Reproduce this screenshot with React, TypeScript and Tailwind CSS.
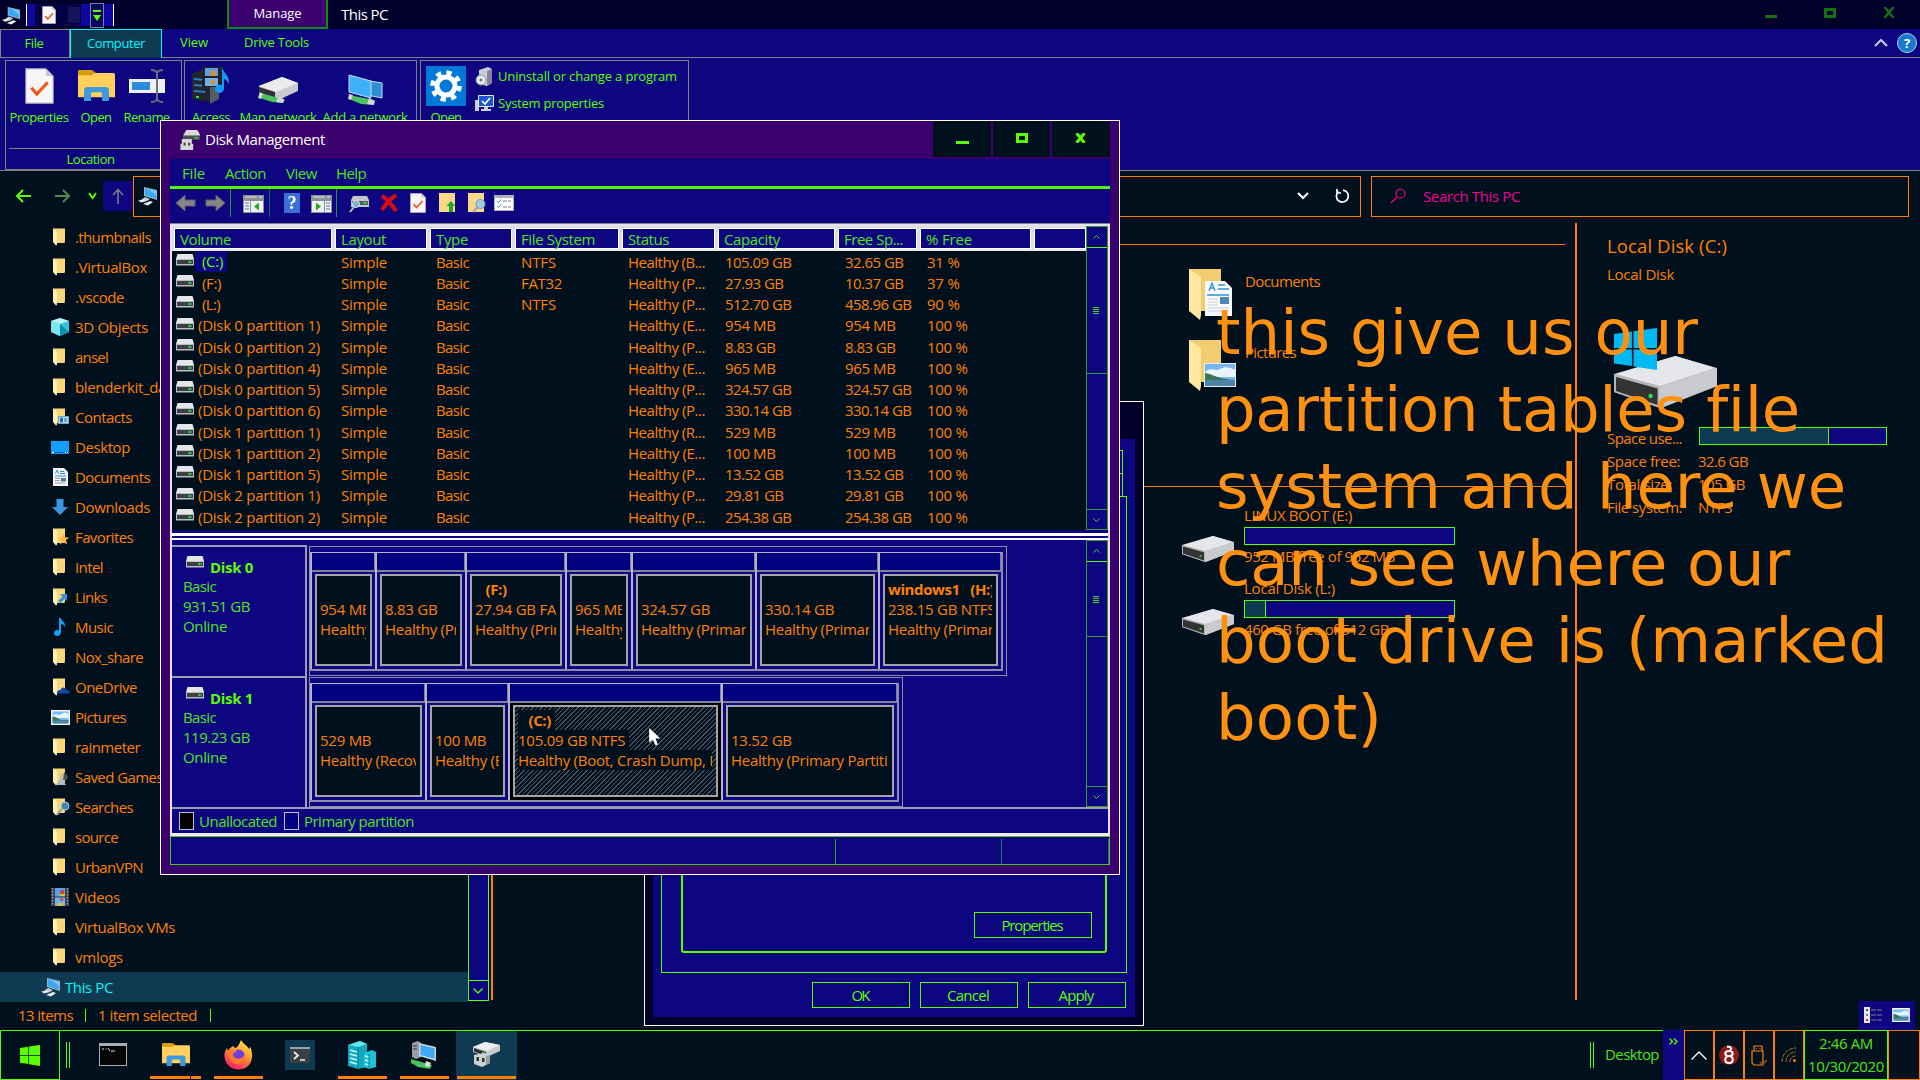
import React, { useLayoutEffect, useRef, useState } from "react";

/* Text whose tracking is adjusted so the run is exactly `w` pixels wide. */
function Fit({ w, children, className = "" }: { w: number; children: string; className?: string }) {
  const ref = useRef<HTMLSpanElement>(null);
  const [ls, setLs] = useState(0);
  useLayoutEffect(() => {
    if (ref.current) {
      const natural = ref.current.getBoundingClientRect().width;
      setLs((w - natural) / children.length);
    }
  }, [w, children]);
  return (
    <span ref={ref} className={`inline-block whitespace-pre shrink-0 ${className}`} style={{ letterSpacing: `${ls}px` }}>
      {children}
    </span>
  );
}

/* ---------- icons ---------- */

function Folder({ extra }: { extra?: string }) {
  return (
    <svg viewBox="0 0 18 18" className="h-[18px] w-[18px] shrink-0 overflow-visible">
      <path d="M2 .5h12v12.5l-.5 2H6z" fill="#f7d77a" />
      <path d="M2 .5l4 3.2v13l-1 .8-3-3.5z" fill="#fff0b8" />
      {extra === "card" && (
        <g>
          <rect x="7.500" y="8.500" width="10" height="7" fill="#b8def2" stroke="#6fa6c6" />
          <path d="M9.500 10h2v4h-2zM13 11h3M13 13h3" fill="#2a6a94" stroke="#2a6a94" />
        </g>
      )}
      {extra === "star" && <path d="M12.500 5.500l1.600 3.800 4 .2-3.100 2.500 1.200 4.500-3.700-2.400-3.600 2.400 1.200-4.500-3-2.500 3.800-.2z" fill="#ffb53a" />}
      {extra === "link" && <path d="M9 6h7v7l-2.200-2.200L9.500 15.500 7 13l4.500-4.500z" fill="#3b93dd" />}
      {extra === "cloud" && <path d="M6 15.500c-.5-3 2-4 3.500-3.500 1-3.500 5-3.500 6 0 2.500 0 3.500 1.500 3 3.500z" fill="#1048a8" />}
      {extra === "chess" && (
        <g>
          <path d="M13 4l4 4-1 4h-4z" fill="#4b4f55" />
          <path d="M10 5l2 1-1 4 4 7H5l4-6z" fill="#aebbc4" />
        </g>
      )}
      {extra === "search" && (
        <g>
          <path d="M11 11l-5 5.500" stroke="#9ba5ac" strokeWidth="2" />
          <circle cx="14" cy="8" r="4" fill="#3f86b5" stroke="#a9c6d8" />
        </g>
      )}
    </svg>
  );
}

function Picture({ className = "h-[15px] w-[19px]" }: { className?: string }) {
  return (
    <svg viewBox="0 0 19 15" className={`${className} shrink-0`}>
      <rect width="19" height="15" fill="#f2f4f6" />
      <rect x="1.500" y="1.500" width="16" height="12" fill="#78bdf0" />
      <path d="M1.500 5c4-2 6 1 9-1s5-1 7 0v4h-16z" fill="#e8f5fc" />
      <path d="M1.500 6.500c4 0 6 3 9 3.500h7v1h-16z" fill="#3f7460" />
      <rect x="1.500" y="10.500" width="16" height="3" fill="#4f86a6" />
    </svg>
  );
}

function ThisPc({ className = "h-5 w-5" }: { className?: string }) {
  return (
    <svg viewBox="0 0 20 20" className={`${className} shrink-0`}>
      <path d="M6 1l13 3v10L6 10z" fill="#9fb4c4" />
      <path d="M7 2.200l11 2.600v7.800L7 9.300z" fill="#39a8f5" />
      <path d="M10 3l8 1.900v4z" fill="#76c8fb" />
      <path d="M7 11l5 2-3 2-6-1z" fill="#c6ced6" />
      <path d="M0 14.500l6-1 3 1.500-6 1.500zM5 18l7-3 3 1-5 3.500z" fill="#e9edf1" />
    </svg>
  );
}

function MiniDrive() {
  return (
    <svg viewBox="0 0 18 12" className="h-3 w-[18px] shrink-0">
      <path d="M1.500 0h15L18 5H0z" fill="#e4e6ea" />
      <path d="M0 5h18v6.500H0z" fill="#b9bcc3" />
      <path d="M1 6h16v4H1z" fill="#3d3f42" />
      <path d="M12 8h4M13.500 6.800v2.500" stroke="#2ee048" />
    </svg>
  );
}

function BigDrive({ className }: { className: string }) {
  return (
    <svg viewBox="0 0 52 26" className={`${className} shrink-0`} preserveAspectRatio="none">
      <path d="M0 9L31 0l21 6v9L24 26 0 18z" fill="#c2c3c7" />
      <path d="M1 9L31 0l20 6-28 9z" fill="#e6e7ea" />
      <path d="M0 9l23 6v11L0 18z" fill="#b4b5b8" />
      <path d="M1 10.500l21 5.800v8.200L1 17.500z" fill="#333" />
      <path d="M23 15.500L52 6v9L23 26z" fill="#c9cace" />
      <circle cx="18.500" cy="20" r="1.100" fill="#26e04a" />
    </svg>
  );
}

function SheetCheck({ className = "h-5 w-4" }: { className?: string }) {
  return (
    <svg viewBox="0 0 16 20" className={`${className} shrink-0`} preserveAspectRatio="none">
      <path d="M.5.5h11l4 4v15H.5z" fill="#f6f6f8" stroke="#bfc0c6" strokeWidth=".6" />
      <path d="M11.500.5v4h4z" fill="#c8c9d0" />
      <path d="M3.500 11l3 3.500L12.500 8" fill="none" stroke="#f0591c" strokeWidth="1.700" />
    </svg>
  );
}

function ExplorerIcon({ className = "h-[31px] w-[37px]" }: { className?: string }) {
  return (
    <svg viewBox="0 0 37 42" className={`${className} shrink-0`} preserveAspectRatio="none">
      <path d="M0 1.500Q0 0 1.500 0H14l4 4v6H0z" fill="#d99c0c" />
      <path d="M0 7h14l3-3h18q2 0 2 2v31H0z" fill="#ffd15c" />
      <path d="M6 42V27q0-4 4-4h17q4 0 4 4v15h-7V32q0-2-2-2h-7q-2 0-2 2v10z" fill="#3d9ade" />
    </svg>
  );
}

function UsbDrive({ className }: { className: string }) {
  return (
    <svg viewBox="0 0 22 22" className={`${className} shrink-0`}>
      <path d="M4 5l3-5h12l3 5v6H4z" fill="#d8dadd" />
      <path d="M4 6h18v5H4z" fill="#4c4e52" />
      <path d="M16 8.500h4" stroke="#2de04a" strokeWidth="1.500" />
      <path d="M2 10h11v5h1.500v7H.500v-7H2z" fill="#d5d6d8" />
      <path d="M4 14h2v3H4zM9 14h2v3H9z" fill="#333" />
    </svg>
  );
}

function UsbDriveLarge() {
  return (
    <svg viewBox="0 0 27 25" className="h-[25px] w-[27px] shrink-0">
      <path d="M0 5L12 0l15 3v6L14 15 0 10z" fill="#c9cacd" />
      <path d="M0 5L12 0l15 3-13 6z" fill="#ededef" />
      <path d="M1 6l12 4v4L1 9.500z" fill="#2c2e31" />
      <path d="M9 11h3" stroke="#2de04a" strokeWidth="1.500" />
      <path d="M1 13l10-2 6 2v8l-8 4-8-3z" fill="#d0d1d4" />
      <path d="M3.500 15h2.500v4H3.500zM9 16h2.500v4H9z" fill="#333" />
      <path d="M17 13v8l-4 2v-9z" fill="#9b9da2" />
    </svg>
  );
}

function sideIcon(kind: string) {
  switch (kind) {
    case "cube":
      return (
        <svg viewBox="0 0 18 18" className="h-[18px] w-[18px]">
          <path d="M9 0l9 3v11l-9 4-9-4V3z" fill="#35c5dc" />
          <path d="M0 3l9 3v12l-9-4z" fill="#7ce6ef" />
          <path d="M9 0l9 3-9 3-9-3z" fill="#b7f4f5" />
          <path d="M9 6l9 8-9 4z" fill="#0b91a8" />
        </svg>
      );
    case "desktop":
      return (
        <svg viewBox="0 0 18 13" className="h-[13px] w-[18px]">
          <rect width="18" height="13" fill="#149dfb" />
          <path d="M0 11.500h18" stroke="#0a5fae" />
          <path d="M1 11.500h2M14 11.500h1M16 11.500h1" stroke="#fff" />
        </svg>
      );
    case "doc":
      return (
        <svg viewBox="0 0 15 18" className="ml-0.5 h-[18px] w-[15px]">
          <path d="M0 0h11l4 4v14H0z" fill="#f4f6f8" />
          <path d="M2.500 5.500L4 2l1.500 3.500M7 3.500h4M7 5.500h5M2 8h11" stroke="#2b8fd6" fill="none" />
          <path d="M2 10.500h5M2 12.500h5M2 15h10" stroke="#9aa0a6" />
          <rect x="8" y="10" width="5" height="3.500" fill="#4d7f9d" />
        </svg>
      );
    case "down":
      return (
        <svg viewBox="0 0 18 18" className="h-[18px] w-[18px]">
          <path d="M5.500 1h7v8H17l-8 8-8-8h4.500z" fill="#3a96e0" />
        </svg>
      );
    case "music":
      return (
        <svg viewBox="0 0 18 18" className="h-[18px] w-[18px]">
          <path d="M8 0h2c0 3 5 4 4 9-1-2-2-3-4-3v8c0 5-7 5-7 1.500C3 12 6.500 11.500 8 12.500z" fill="#12a0f5" />
        </svg>
      );
    case "pic":
      return <Picture />;
    case "video":
      return (
        <svg viewBox="0 0 18 18" className="h-[18px] w-[18px]">
          <rect width="18" height="18" fill="#3b3e44" />
          <path d="M1.500 0v18M16.500 0v18" stroke="#9aa0a8" strokeWidth="1.500" strokeDasharray="1.500 1.500" />
          <rect x="4" width="10" height="8.500" fill="#5aa0ef" />
          <rect x="4" y="9.500" width="10" height="8.500" fill="#6fb2f5" />
          <path d="M10 2h3v4h-4zM9 10l4 1-3 3z" fill="#d8402c" />
          <path d="M9 6h5v2H8zM7 15h5v3H6z" fill="#d9c22f" />
        </svg>
      );
    default:
      return <Folder extra={kind} />;
  }
}

function WinLogo({ className }: { className: string }) {
  return (
    <svg viewBox="0 0 42 42" className={className} preserveAspectRatio="none">
      <path d="M0 6l17.500-2.500V20H0zM19 3.200L42 0v20H19zM0 21.500h17.500V38L0 35.500zM19 21.500h23V42l-23-3.500z" fill="currentColor" />
    </svg>
  );
}

/* ---------- explorer ---------- */

function TitleBar() {
  return (
    <div className="flex h-[29px] w-full bg-[#00002b] text-white">
      <div className="flex w-[26px] items-center pl-0.5 pt-0.5">
        <ThisPc className="h-[19px] w-[19px]" />
      </div>
      <div className="mt-1 flex h-[22px] w-[88px] items-center border-x border-white bg-[#0d06a0]">
        <div className="ml-2 flex h-full w-[46px] items-center bg-[#00002b]/80 pl-[7px]">
          <SheetCheck className="h-[18px] w-[14px]" />
          <div className="ml-3 h-4 w-3 bg-[#14145a]" />
        </div>
        <div className="ml-[9px] flex h-[25px] w-3.5 shrink-0 flex-col items-center border border-[#808090] bg-[#070760] pt-1.5">
          <div className="h-0.5 w-2 bg-[#59ff00]" />
          <svg viewBox="0 0 8 6" className="mt-[3px] h-1.5 w-2">
            <path d="M0 0h8L4 6z" fill="#59ff00" />
          </svg>
        </div>
      </div>
      <div className="ml-[113px] flex h-[29px] w-[101px] items-center justify-center border-x-2 border-b-2 border-[#0f8a16] bg-[#3a006e] text-[13px]">
        <Fit w={48}>Manage</Fit>
      </div>
      <div className="ml-[13px] flex items-center text-[15px]">
        <Fit w={47}>This PC</Fit>
      </div>
      <div className="ml-auto flex items-center gap-[47px] pr-[25px] text-[#156f16]">
        <div className="mt-1 h-[3px] w-3 bg-current" />
        <div className="-mt-1 h-2.5 w-3 border-[3px] border-current" />
        <svg viewBox="0 0 12 11" className="-mt-1 h-[11px] w-3">
          <path d="M1.500 0l9 11M10.500 0l-9 11" stroke="currentColor" strokeWidth="2.500" />
        </svg>
      </div>
    </div>
  );
}

function BigButton({ icon, label, w, className }: { icon: React.ReactNode; label: string; w: number; className: string }) {
  return (
    <div className={`flex flex-col items-center ${className}`}>
      <div className="flex h-[41px] items-center">{icon}</div>
      <div className="mt-px leading-5">
        <Fit w={w}>{label}</Fit>
      </div>
    </div>
  );
}

function Ribbon() {
  return (
    <div className="h-[142px] w-full bg-[#0d0680] text-[13px] text-[#59ff00]">
      <div className="flex h-[29px] border-b border-[#808080]">
        <div className="flex w-[70px] items-center justify-center border border-b-0 border-[#808080] pr-0.5">
          <Fit w={19}>File</Fit>
        </div>
        <div className="flex h-[29px] w-[92px] items-center justify-center border border-b-0 border-[#00f6ff] bg-[#0e3a52] text-[#00f6ff]">
          <Fit w={58}>Computer</Fit>
        </div>
        <div className="flex items-center pl-[18px]">
          <Fit w={28}>View</Fit>
        </div>
        <div className="flex items-center pl-9">
          <Fit w={65}>Drive Tools</Fit>
        </div>
        <div className="ml-auto flex items-center gap-[9px] pr-[3px]">
          <svg viewBox="0 0 14 8" className="h-2 w-3.5">
            <path d="M1 7l6-6 6 6" fill="none" stroke="#c9cfe4" strokeWidth="2" />
          </svg>
          <div className="h-5 w-5 rounded-full border border-[#a8d4f4] bg-[#1979ca] text-center text-[13px] font-bold leading-[18px] text-white">?</div>
        </div>
      </div>
      <div className="flex h-[113px] border-b border-[#808080] px-[5px] pt-0.5">
        <div className="flex h-[110px] w-[177px] flex-col border border-[#808080]">
          <div className="flex h-[88px] pt-1">
            <BigButton className="ml-[3px] w-[60px]" w={59} label="Properties" icon={<SheetCheck className="h-9 w-[29px]" />} />
            <BigButton className="ml-[9px] w-9" w={31} label="Open" icon={<ExplorerIcon />} />
            <BigButton
              className="ml-[9px] w-[47px]"
              w={46}
              label="Rename"
              icon={
                <svg viewBox="0 0 36 34" className="h-[34px] w-9">
                  <path d="M0 10h36v14H0z" fill="#f0f0f4" />
                  <path d="M3 13h18v8H3z" fill="#2a8ce0" />
                  <path d="M22 1q5 0 6 3 1-3 6-3M28 3v28M22 33q5 0 6-3 1 3 6 3" fill="none" stroke="#6c6c80" strokeWidth="2" />
                </svg>
              }
            />
          </div>
          <div className="mx-[3px] border-t border-[#808080] text-center leading-[20px]">
            <Fit w={48} className="-ml-1.5">Location</Fit>
          </div>
        </div>
        <div className="ml-0.5 flex h-[110px] w-[233px] border border-[#808080] pt-1">
          <BigButton
            className="ml-1.5 w-10"
            w={38}
            label="Access"
            icon={
              <svg viewBox="0 0 40 38" className="h-[38px] w-10">
                <path d="M1 6l18-5v34L1 32z" fill="#23262c" />
                <path d="M19 3l9 3v26l-9 5z" fill="#555a62" />
                <path d="M3 12l11 1M3 18l11 1M3 24l11 1" stroke="#2a80c8" strokeWidth="2" />
                <path d="M5 30h3" stroke="#34e04a" strokeWidth="2" />
                <rect x="11" width="20" height="20" fill="#202226" />
                <rect x="14" y="1" width="13" height="8" fill="#5aa0e8" />
                <rect x="14" y="11" width="13" height="8" fill="#6eb0f0" />
                <path d="M19 4h6v5h-5zM20 13h4v4h-5z" fill="#d9902f" />
                <path d="M31 0c1 6 8 8 7 17-2-4-4-5-5-5v10c-1 6-10 5-9-1 1-3 5-4 7-3z" fill="#149af5" />
              </svg>
            }
          />
          <BigButton
            className="ml-2 w-[78px]"
            w={77}
            label="Map network"
            icon={
              <svg viewBox="0 0 40 26" className="mt-2 h-[26px] w-10">
                <path d="M1 9L24 0l16 6v8L18 24 1 17z" fill="#c9cacd" />
                <path d="M1 9L24 0l16 6-22 9z" fill="#ececef" />
                <path d="M1 10l16 5v6L1 16z" fill="#303236" />
                <path d="M3 16l14 4 10 3-2 3-11-1L2 21z" fill="#4cc25c" />
                <path d="M2 15l3 2-2 5-3-1zM20 20l6 2-1 4-7-1z" fill="#d3d5d8" />
              </svg>
            }
          />
          <BigButton
            className="ml-1 w-[88px]"
            w={85}
            label="Add a network"
            icon={
              <svg viewBox="0 0 35 31" className="mt-2 h-[31px] w-[35px]" preserveAspectRatio="none">
                <path d="M10 5l24 4v15l-24-5z" fill="#2c8fd4" stroke="#bfe2f8" />
                <path d="M1 1l22 6v17L1 18z" fill="#3fb0f8" stroke="#bfe2f8" />
                <path d="M1 21l20 4 6 2-2 4-12-1-12-5z" fill="#4cc25c" />
                <path d="M1 20l4 1-2 5-3-1zM21 24l6 3-1 4-7-1z" fill="#d3d5d8" />
              </svg>
            }
          />
        </div>
        <div className="ml-[3px] flex h-[110px] w-[269px] border border-[#808080] pt-1">
          <BigButton
            className="ml-[5px] w-10"
            w={31}
            label="Open"
            icon={
              <div className="flex h-10 w-10 items-center justify-center bg-[#0078d8]">
                <svg viewBox="0 0 32 32" className="h-8 w-8">
                  <circle cx="16" cy="16" r="9" fill="none" stroke="#fff" strokeWidth="5" />
                  <circle cx="16" cy="16" r="13.500" fill="none" stroke="#fff" strokeWidth="4.500" strokeDasharray="5.300 5.300" />
                </svg>
              </div>
            }
          />
          <div className="ml-[9px] flex flex-col">
            <div className="-mt-px flex h-[25px] items-center">
              <svg viewBox="0 0 18 20" className="h-5 w-[18px]">
                <path d="M4 3l9-3 4 2v14l-5 3-8-2z" fill="#c9ced6" />
                <path d="M12 4l5-2v14l-5 3z" fill="#8b7f9e" />
                <circle cx="6" cy="13" r="5" fill="#e8ebee" stroke="#8a929c" />
                <circle cx="6" cy="13" r="1.500" fill="#6c7480" />
              </svg>
              <Fit w={179} className="ml-[5px]">Uninstall or change a program</Fit>
            </div>
            <div className="mt-px flex h-[27px] items-center">
              <svg viewBox="0 0 19 17" className="h-[17px] w-[19px]">
                <path d="M0 5h4v11H0z" fill="#c9ced6" />
                <path d="M3.500.5h15v11h-15z" fill="#1c55d0" stroke="#e6e8ec" />
                <path d="M7 6l3 3 5-6" fill="none" stroke="#fff" strokeWidth="1.700" />
                <path d="M9 12h4v2h3v2H6v-2h3z" fill="#c9ced6" />
              </svg>
              <Fit w={106} className="ml-1">System properties</Fit>
            </div>
          </div>
        </div>
      </div>
    </div>
  );
}

function AddressRow() {
  return (
    <div className="flex h-[50px] items-center">
      <svg viewBox="0 0 16 14" className="ml-[15px] h-3.5 w-4 text-[#59ff00]">
        <path d="M16 7H2M8 1L2 7l6 6" fill="none" stroke="currentColor" strokeWidth="2" />
      </svg>
      <svg viewBox="0 0 16 14" className="ml-6 h-3.5 w-4">
        <path d="M0 7h14M8 1l6 6-6 6" fill="none" stroke="#4f8a50" strokeWidth="2" />
      </svg>
      <svg viewBox="0 0 9 8" className="ml-[17px] h-2 w-[9px]">
        <path d="M1 1l3.500 5L8 1" fill="none" stroke="#59ff00" strokeWidth="2" />
      </svg>
      <div className="ml-[6px] flex h-[30px] w-[30px] items-center justify-center bg-[#0d0680]">
        <svg viewBox="0 0 12 16" className="h-4 w-3">
          <path d="M6 16V2M1 7l5-5.500L11 7" fill="none" stroke="#808080" strokeWidth="1.500" />
        </svg>
      </div>
      <div className="flex h-[41px] w-[1228px] items-center border border-[#ff8000] pl-1">
        <ThisPc />
        <svg viewBox="0 0 12 8" className="ml-auto h-2 w-3">
          <path d="M1 1l5 5 5-5" fill="none" stroke="#fff" strokeWidth="2" />
        </svg>
        <svg viewBox="0 0 16 16" className="ml-[25px] mr-[10px] h-4 w-4">
          <path d="M4.500 3.500A6 6 0 1 0 9 2.100M3 1v4h4" fill="none" stroke="#fff" strokeWidth="1.700" />
        </svg>
      </div>
      <div className="ml-[10px] flex h-[41px] w-[538px] items-center border border-[#ff8000] text-[15px] text-[#f0009c]">
        <svg viewBox="0 0 16 16" className="ml-[18px] h-4 w-4">
          <circle cx="10.500" cy="5.500" r="4.500" fill="none" stroke="currentColor" strokeWidth="1.200" />
          <path d="M7 9l-6 6" stroke="currentColor" strokeWidth="1.200" />
        </svg>
        <Fit w={97} className="ml-[17px]">Search This PC</Fit>
      </div>
    </div>
  );
}

const tree: [string, string, number][] = [
  [".thumbnails", "", 76],
  [".VirtualBox", "", 72],
  [".vscode", "", 49],
  ["3D Objects", "cube", 73],
  ["ansel", "", 33],
  ["blenderkit_data", "", 104],
  ["Contacts", "card", 57],
  ["Desktop", "desktop", 55],
  ["Documents", "doc", 75],
  ["Downloads", "down", 75],
  ["Favorites", "star", 58],
  ["Intel", "", 28],
  ["Links", "link", 32],
  ["Music", "music", 38],
  ["Nox_share", "", 68],
  ["OneDrive", "cloud", 62],
  ["Pictures", "pic", 51],
  ["rainmeter", "", 65],
  ["Saved Games", "chess", 88],
  ["Searches", "search", 58],
  ["source", "", 43],
  ["UrbanVPN", "", 68],
  ["Videos", "video", 45],
  ["VirtualBox VMs", "", 100],
  ["vmlogs", "", 48],
];

function Sidebar() {
  return (
    <div className="flex h-[781px] w-[493px] shrink-0">
      <div className="w-[468px] shrink-0 pt-px">
        {tree.map(([label, icon, w]) => (
          <div key={label} className="flex h-[30px] items-center pl-[51px]">
            <div className="flex w-[18px] shrink-0 items-center">{sideIcon(icon)}</div>
            <Fit w={w} className="ml-[6px]">{label}</Fit>
          </div>
        ))}
        <div className="flex h-[30px] items-center bg-[#0e3a52] pl-[41px] text-[#00f6ff]">
          <ThisPc />
          <Fit w={48} className="ml-1">This PC</Fit>
        </div>
      </div>
      <div className="flex h-[780px] w-[21px] shrink-0 flex-col justify-end border border-[#59ff00] bg-[#0d0680]">
        <div className="flex h-5 items-center justify-center border-t border-[#59ff00] pr-0.5">
          <svg viewBox="0 0 10 6" className="h-1.5 w-2.5">
            <path d="M.5.5L5 5 9.500.5" fill="none" stroke="#59ff00" strokeWidth="1.300" />
          </svg>
        </div>
      </div>
      <div className="ml-[2px] h-[779px] w-0.5 bg-[#ff8000]" />
    </div>
  );
}

function FolderTile({ label, w, pic }: { label: string; w: number; pic: boolean }) {
  return (
    <div className="flex h-[71px]">
      <svg viewBox="0 0 48 54" className="mt-px h-[54px] w-12">
        <path d="M0 1h32v42H10z" fill="#f2cd6e" />
        <path d="M0 1l12 8v38l-1 5L0 43z" fill="#ffe7a0" />
        {pic ? (
          <g>
            <rect x="15.500" y="24.500" width="31" height="23" fill="#78b4ee" stroke="#e6eef4" />
            <path d="M16 33c6-6 10 0 15-3s10-2 15 1v7H16z" fill="#e9f4fc" />
            <path d="M16 34c8 1 12 6 30 7H16z" fill="#3f7455" />
            <path d="M16 41h30v6H16z" fill="#4c83a8" />
          </g>
        ) : (
          <g>
            <path d="M16 13h20l7 7v28H16z" fill="#f8f9fb" />
            <path d="M20 23l3-8 3 8M21 20h4M18 27h22M29 17h7M29 21h11" fill="none" stroke="#3192d8" strokeWidth="1.300" />
            <path d="M19 31h10M19 34h10M19 37h10M19 40h21M19 43h21" stroke="#c8ccd0" />
            <rect x="31" y="29" width="9" height="7" fill="#4c88b0" />
          </g>
        )}
      </svg>
      <Fit w={w} className="ml-2 mt-1 h-5 leading-5">{label}</Fit>
    </div>
  );
}

function DriveTile({ label, w, sub, subW, used }: { label: string; w: number; sub: string; subW: number; used: boolean }) {
  return (
    <div className="flex h-[73px]">
      <BigDrive className="mt-[30px] h-[26px] w-[52px]" />
      <div className="ml-[10px] flex flex-col">
        <Fit w={w} className="-mt-px h-5 self-start leading-5">{label}</Fit>
        <div className="mt-0.5 flex h-[18px] w-[211px] border border-[#59ff00] bg-[#0d0680]">
          {used && <div className="w-[21px] border-r border-[#59ff00] bg-[#0e3a52]" />}
        </div>
        <Fit w={subW} className="mt-px h-5 self-start leading-5">{sub}</Fit>
      </div>
    </div>
  );
}

function ContentPane() {
  return (
    <div className="flex w-[1082px] flex-col">
      <div className="mt-[21px] h-px w-[1072px] bg-[#ff8000]" />
      <div className="ml-[696px] mt-[22px] flex flex-col">
        <FolderTile label="Documents" w={75} pic={false} />
        <FolderTile label="Pictures" w={51} pic />
      </div>
      <div className="mt-[77px] h-px w-[1072px] bg-[#ff8000]" />
      <div className="ml-[689px] mt-[19px] flex flex-col">
        <DriveTile label="LINUX BOOT (E:)" w={108} sub="952 MB free of 952 MB" subW={151} used={false} />
        <DriveTile label="Local Disk (L:)" w={91} sub="460 GB free of 512 GB" subW={145} used />
      </div>
    </div>
  );
}

function DetailLine({ name, w, value, valueW }: { name: string; w: number; value: string; valueW: number }) {
  return (
    <div className="flex h-[23px] items-center">
      <div className="w-[91px]">
        <Fit w={w}>{name}</Fit>
      </div>
      <Fit w={valueW}>{value}</Fit>
    </div>
  );
}

function DetailsPane() {
  return (
    <div className="h-[777px] flex-1 border-l-2 border-[#ff8000] pl-[30px]">
      <div className="pt-[10px] text-[18.500px] leading-[26px]">
        <Fit w={120}>Local Disk (C:)</Fit>
      </div>
      <div className="mt-[5px] leading-5">
        <Fit w={67}>Local Disk</Fit>
      </div>
      <div className="relative ml-[7px] mt-[44px] h-[80px] w-[104px] pt-7">
        <BigDrive className="h-[52px] w-[103px]" />
        <WinLogo className="absolute left-0 top-0 h-[42px] w-[43px] text-[#00b8f4]" />
      </div>
      <div className="mt-[19px] flex h-[23px]">
        <div className="mt-[1px] w-[92px] leading-5">
          <Fit w={75}>Space use...</Fit>
        </div>
        <div className="flex h-[18px] w-[188px] border border-[#59ff00] bg-[#0d0680]">
          <div className="w-[129px] border-r border-[#59ff00] bg-[#0e3a52]" />
        </div>
      </div>
      <DetailLine name="Space free:" w={73} value="32.6 GB" valueW={50} />
      <DetailLine name="Total size:" w={65} value="105 GB" valueW={47} />
      <DetailLine name="File system:" w={75} value="NTFS" valueW={34} />
    </div>
  );
}

function Explorer() {
  return (
    <div className="flex h-[1030px] w-full flex-col text-[15px] text-[#ff8000]">
      <TitleBar />
      <Ribbon />
      <AddressRow />
      <div className="flex h-[780px]">
        <Sidebar />
        <div className="flex flex-1 pt-0.5">
          <ContentPane />
          <DetailsPane />
        </div>
      </div>
      <div className="flex h-[28px] items-center pl-[18px]">
        <Fit w={55}>13 items</Fit>
        <div className="ml-3 h-[13px] w-px bg-[#59ff00]" />
        <Fit w={99} className="ml-3">1 item selected</Fit>
        <div className="ml-[13px] h-[13px] w-px bg-[#59ff00]" />
        <div className="ml-auto mr-[5px] flex h-[29px] w-14 items-center gap-2.5 bg-[#0d0680] pl-[5px]">
          <svg viewBox="0 0 18 16" className="h-4 w-[18px]">
            <path d="M0 0h6v16H0z" fill="#e8e8ec" />
            <path d="M2 2h2v2H2z" fill="#286080" />
            <path d="M2 7h2v2H2z" fill="#808080" />
            <path d="M2 12h2v2H2z" fill="#c02828" />
            <path d="M7 3h5M13 3h5M7 8h5M13 8h5M7 13h5M13 13h5" stroke="#808080" />
          </svg>
          <Picture className="h-[14px] w-[18px]" />
        </div>
      </div>
    </div>
  );
}

/* ---------- properties dialog behind ---------- */

function DialogButton({ label, w, className }: { label: string; w: number; className: string }) {
  return (
    <div className={`flex h-[26px] items-center justify-center border border-[#59ff00] pr-0.5 ${className}`}>
      <Fit w={w}>{label}</Fit>
    </div>
  );
}

function PropertiesDialog() {
  return (
    <div className="absolute left-[644px] top-[401px] h-[625px] w-[500px] border border-white bg-[#00002b] px-2 pb-2 pt-[37px] text-[15px] text-[#59ff00]">
      <div className="h-full w-full bg-[#0d0680] pl-2 pr-2 pt-[11px]">
        <div className="h-[23px] w-[462px] border border-b-0 border-[#59ff00]" />
        <div className="h-[23px] w-[462px] border border-b-0 border-[#59ff00]" />
        <div className="flex h-[477px] w-[466px] flex-col justify-end border border-[#59ff00] px-[19px] pb-[19px]">
          <div className="flex h-[440px] flex-col items-end justify-end rounded-[3px] border-2 border-[#59ff00] pb-[13px] pr-[13px]">
            <Fit w={170} className="mb-[37px] mr-[114px] leading-5">Change settings property</Fit>
            <DialogButton label="Properties" w={61} className="w-[118px]" />
          </div>
        </div>
        <div className="mt-[9px] flex w-[465px] justify-end gap-2.5">
          <DialogButton label="OK" w={17} className="w-[98px]" />
          <DialogButton label="Cancel" w={42} className="w-[98px]" />
          <DialogButton label="Apply" w={35} className="w-[98px]" />
        </div>
      </div>
    </div>
  );
}

/* ---------- disk management ---------- */

const rows: string[][] = [
  ["(C:)", "NTFS", "(B...", "105.09 GB", "32.65 GB", "31 %"],
  ["(F:)", "FAT32", "(P...", "27.93 GB", "10.37 GB", "37 %"],
  ["(L:)", "NTFS", "(P...", "512.70 GB", "458.96 GB", "90 %"],
  ["(Disk 0 partition 1)", "", "(E...", "954 MB", "954 MB", "100 %"],
  ["(Disk 0 partition 2)", "", "(P...", "8.83 GB", "8.83 GB", "100 %"],
  ["(Disk 0 partition 4)", "", "(E...", "965 MB", "965 MB", "100 %"],
  ["(Disk 0 partition 5)", "", "(P...", "324.57 GB", "324.57 GB", "100 %"],
  ["(Disk 0 partition 6)", "", "(P...", "330.14 GB", "330.14 GB", "100 %"],
  ["(Disk 1 partition 1)", "", "(R...", "529 MB", "529 MB", "100 %"],
  ["(Disk 1 partition 2)", "", "(E...", "100 MB", "100 MB", "100 %"],
  ["(Disk 1 partition 5)", "", "(P...", "13.52 GB", "13.52 GB", "100 %"],
  ["(Disk 2 partition 1)", "", "(P...", "29.81 GB", "29.81 GB", "100 %"],
  ["(Disk 2 partition 2)", "", "(P...", "254.38 GB", "254.38 GB", "100 %"],
];

/* Advance width of the numeric columns in pixels, by character class. */
function numWidth(s: string) {
  let w = 0;
  for (const c of s) w += c === " " ? 4.3 : c === "." ? 3.4 : c === "G" ? 10 : c === "M" ? 13.5 : c === "B" ? 8.7 : c === "%" ? 12.3 : 8;
  return w;
}

const headers: [string, number, string][] = [
  ["Volume", 51, "w-[158px]"],
  ["Layout", 45, "w-[92px]"],
  ["Type", 32, "w-[82px]"],
  ["File System", 74, "w-[104px]"],
  ["Status", 41, "w-[93px]"],
  ["Capacity", 56, "w-[117px]"],
  ["Free Sp...", 59, "w-[79px]"],
  ["% Free", 46, "w-[111px]"],
];

function Chevron({ up }: { up: boolean }) {
  return (
    <svg viewBox="0 0 7 4" className={up ? "h-1 w-[7px]" : "h-1 w-[7px] rotate-180"}>
      <path d="M.5 3.500l3-3 3 3" fill="none" stroke="#4fd41c" />
    </svg>
  );
}

function ScrollBar({ className, thumb }: { className: string; thumb: string }) {
  return (
    <div className={`flex w-[22px] shrink-0 flex-col border-l border-t border-r border-[#3c9a2a] bg-[#0d0680] ${className}`}>
      <div className="flex h-[21px] items-center justify-center border-b border-[#59ff00] pr-0.5">
        <Chevron up />
      </div>
      <div className={`flex flex-col items-center justify-center gap-px border-b border-[#3c9a2a] pr-0.5 ${thumb}`}>
        <div className="h-px w-1.5 bg-[#4fd41c]" />
        <div className="h-px w-1.5 bg-[#4fd41c]" />
        <div className="h-px w-1.5 bg-[#4fd41c]" />
        <div className="h-px w-1.5 bg-[#4fd41c]" />
      </div>
      <div className="mt-auto flex h-[21px] items-center justify-center border-y border-[#3c9a2a] pr-0.5">
        <Chevron up={false} />
      </div>
    </div>
  );
}

function VolumeList() {
  return (
    <div className="flex h-[306px] border-t-2 border-[#e4e4ea] bg-[#00101c]">
      <div className="w-[914px]">
        <div className="flex h-[25px] gap-[3px] overflow-hidden border-b-2 border-[#e8e8ee] bg-[#dcdce4] pl-[2px] pt-0.5 text-[#4fe41c]">
          {headers.map(([h, w, cls]) => (
            <div key={h} className={`h-[21px] shrink-0 border border-white bg-[#0d0680] pl-[5px] pt-px leading-[19px] ${cls}`}>
              <Fit w={w} className="h-[19px]">{h}</Fit>
            </div>
          ))}
          <div className="flex-1 border border-white bg-[#0d0680]" />
        </div>
        <div className="-mt-0.5 flex flex-col">
          {rows.map((r, i) => (
            <div key={r[0]} className="flex h-[21.25px] items-center pt-1">
              <div className="flex w-[169px] items-center">
                <div className="-mt-1 ml-1 flex">
                  <MiniDrive />
                </div>
                {i < 3 ? (
                  <div className={i === 0 ? "ml-px h-[21px] w-8 bg-[#0d0680] pl-[7px] leading-[21px] text-[#59ff00]" : "ml-px w-8 pl-[7px]"}>
                    <Fit w={i === 0 ? 21 : i === 1 ? 19 : 18}>{r[0]}</Fit>
                  </div>
                ) : (
                  <Fit w={122} className="ml-1">{r[0]}</Fit>
                )}
              </div>
              <Fit w={46} className="mr-[49px]">Simple</Fit>
              <Fit w={33} className="mr-[52px]">Basic</Fit>
              <div className="w-[107px]">{r[1] && <Fit w={r[1] === "NTFS" ? 35 : 41}>{r[1]}</Fit>}</div>
              <div className="w-[97px]">
                <Fit w={77}>{"Healthy " + r[2]}</Fit>
              </div>
              <div className="w-[120px]">
                <Fit w={numWidth(r[3])}>{r[3]}</Fit>
              </div>
              <div className="w-[82px]">
                <Fit w={numWidth(r[4])}>{r[4]}</Fit>
              </div>
              <Fit w={numWidth(r[5])}>{r[5]}</Fit>
            </div>
          ))}
        </div>
      </div>
      <ScrollBar className="h-[304px]" thumb="h-[126px]" />
    </div>
  );
}

type Part = { cls: string; title?: string; size: string; status: string; active?: boolean };

const disk0: Part[] = [
  { cls: "w-[65px]", size: "954 MB", status: "Healthy (EFI)" },
  { cls: "w-[90px]", size: "8.83 GB", status: "Healthy (Primary)" },
  { cls: "w-[100px]", title: "   (F:)", size: "27.94 GB FAT32", status: "Healthy (Primary)" },
  { cls: "w-[66px]", size: "965 MB", status: "Healthy (EFI)" },
  { cls: "w-[124px]", size: "324.57 GB", status: "Healthy (Primary Partition)" },
  { cls: "w-[123px]", size: "330.14 GB", status: "Healthy (Primary Partition)" },
  { cls: "w-[123px]", title: "windows1   (H:)", size: "238.15 GB NTFS", status: "Healthy (Primary Partition)" },
];
const disk1: Part[] = [
  { cls: "w-[115px]", size: "529 MB", status: "Healthy (Recovery Partition)" },
  { cls: "w-[83px]", size: "100 MB", status: "Healthy (EFI)" },
  { cls: "w-[213px]", title: "   (C:)", size: "105.09 GB NTFS", status: "Healthy (Boot, Crash Dump, Primary Partition)", active: true },
  { cls: "w-[176px]", size: "13.52 GB", status: "Healthy (Primary Partition)" },
];

function Partition({ p }: { p: Part }) {
  const bg = p.active ? "bg-[#00101c]" : "";
  return (
    <div className={`flex h-full shrink-0 flex-col border-l-2 border-t border-[#b4b4c4] ${p.cls}`}>
      <div className="h-[19px] border-b-2 border-r border-[#808098] bg-[#000080]" />
      <div className={`flex-1 px-[3px] pb-[3px] pt-[2px] ${p.active ? "bg-black" : ""}`}>
        <div
          className={`h-[92px] border-2 border-[#a4a4a8] pl-[3px] pr-1 pt-[3px] leading-5 text-[#ff8000] ${
            p.active ? "bg-[repeating-linear-gradient(135deg,#44525e_0_1px,#00101c_1px_3.180px)]" : "bg-[#00101c]"
          }`}
        >
          <div className="overflow-hidden whitespace-pre tracking-[-0.25px]">
            <div className="h-5 font-bold tracking-[-0.4px]">
              <span className={`inline-block h-5 pr-1 ${bg}`}>{p.title ?? ""}</span>
            </div>
            <div className="h-5">
              <span className={`inline-block h-5 pr-1 ${bg}`}>{p.size}</span>
            </div>
            <div className="h-5">
              <span className={`inline-block h-5 ${bg}`}>{p.status}</span>
            </div>
          </div>
        </div>
      </div>
    </div>
  );
}

function DiskRow({ name, size, parts, className }: { name: string; size: string; parts: Part[]; className: string }) {
  return (
    <div className="flex h-[131px]">
      <div className="w-[135px] border-r-2 border-t-2 border-[#9c9cb4] pl-[11px] pt-[8px] leading-5 text-[#4fe41c]">
        <div className="mb-px flex h-5">
          <div className="ml-[3px] mt-px">
            <MiniDrive />
          </div>
          <Fit w={43} className="ml-[6px] mt-0.5 font-bold text-[#59ff00]">{name}</Fit>
        </div>
        <div>
          <Fit w={33}>Basic</Fit>
        </div>
        <div>
          <Fit w={67}>{size}</Fit>
        </div>
        <div>
          <Fit w={44}>Online</Fit>
        </div>
      </div>
      <div className={`ml-0.5 mt-px h-[130px] border border-[#8c8ca8] pt-[5px] ${className}`}>
        <div className="flex h-[119px] w-fit border-b-2 border-r-2 border-[#8c8ca8]">
          {parts.map((p, i) => (
            <Partition key={i} p={p} />
          ))}
        </div>
      </div>
    </div>
  );
}

function Toolbar() {
  return (
    <div className="flex h-[35px] items-start pt-[4px]">
      <svg viewBox="0 0 20 18" className="ml-[6px] mt-px h-[18px] w-5">
        <path d="M0 9l9-8v5h10v6H9v5z" fill="#858585" stroke="#5e5e66" />
      </svg>
      <svg viewBox="0 0 20 18" className="ml-[9px] mt-px h-[18px] w-5">
        <path d="M20 9l-9-8v5H1v6h10v5z" fill="#858585" stroke="#5e5e66" />
      </svg>
      <div className="-mt-1 ml-[5px] h-[28px] w-px bg-[#2f8f3a]" />
      <svg viewBox="0 0 21 18" className="ml-[12px] mt-0.5 h-[18px] w-[21px]">
        <rect width="21" height="18" fill="#8d9096" />
        <path d="M2 2h12M16 2h3" stroke="#e8e8e8" />
        <path d="M1 6h6v11H1zM8 6h12v11H8z" fill="#f1f1f3" />
        <path d="M2 8h4M2 11h4M2 14h4" stroke="#3d78b8" />
        <path d="M16 7.500v8L11 11.500z" fill="#2aa52a" />
      </svg>
      <div className="-mt-1 ml-[5px] h-[28px] w-px bg-[#1f6a5a]" />
      <div className="ml-[14px] flex h-5 w-4 items-center justify-center bg-[#3a6fd8] font-['Liberation_Serif'] text-[18px] font-bold leading-5 text-white">?</div>
      <svg viewBox="0 0 21 18" className="ml-[11px] mt-0.5 h-[18px] w-[21px]">
        <rect width="21" height="18" fill="#8d9096" />
        <path d="M2 2h12M16 2h3" stroke="#e8e8e8" />
        <path d="M1 6h12v11H1zM14 6h6v11h-6z" fill="#f1f1f3" />
        <path d="M15 8h4M15 11h4M15 14h4" stroke="#3d78b8" />
        <path d="M5 7.500v8l5-4z" fill="#2aa52a" />
      </svg>
      <div className="-mt-1 ml-[4px] h-[28px] w-px bg-[#2f8f3a]" />
      <svg viewBox="0 0 20 18" className="ml-[12px] mt-0.5 h-[18px] w-5">
        <path d="M4 1h14l2 4v7H2V5z" fill="#c4c6ca" />
        <path d="M3 6h16v4H3z" fill="#55585c" />
        <path d="M14 8h4" stroke="#2ee048" strokeWidth="1.500" />
        <path d="M5 12l-4 5" stroke="#b8c4cc" strokeWidth="2" />
        <circle cx="7" cy="9" r="3.500" fill="#7fb0cc" stroke="#cfe0ea" />
      </svg>
      <svg viewBox="0 0 18 18" className="ml-[11px] mt-px h-[18px] w-[18px]">
        <path d="M2 2c5 3 10 9 14 15M16 1C9 6 5 11 2 16" fill="none" stroke="#d80c10" strokeWidth="4" />
      </svg>
      <SheetCheck className="ml-[12px] h-5 w-4" />
      <svg viewBox="0 0 17 20" className="ml-[13px] h-5 w-[17px]">
        <path d="M0 0h16v19H0z" fill="#f6d888" />
        <path d="M12 8l4.500 5H14v6h-4v-6H7.500z" fill="#22a52c" />
      </svg>
      <svg viewBox="0 0 18 20" className="ml-[12px] h-5 w-[18px]">
        <path d="M0 0h16v19H0z" fill="#f6d888" />
        <path d="M10 14l-5 5" stroke="#9aa4aa" strokeWidth="2" />
        <circle cx="12.500" cy="11" r="4.500" fill="#a4cce4" stroke="#6f98b0" />
      </svg>
      <svg viewBox="0 0 20 16" className="ml-[8px] mt-0.5 h-4 w-5">
        <rect width="20" height="16" fill="#aeb0b6" />
        <rect x="1" y="3" width="18" height="12" fill="#fafafa" />
        <path d="M3 6l1.500 1.500L7 4.500M3 11l1.500 1.500L7 9.500" fill="none" stroke="#2b8fd6" />
        <path d="M9 6h4M14 6h3M9 12h4M14 12h3" stroke="#7c8086" />
      </svg>
    </div>
  );
}

function DiskManagement() {
  return (
    <div className="absolute left-[160px] top-[120px] flex h-[755px] w-[960px] flex-col border border-white bg-[#3a006e] px-[9px] text-[15px] text-[#ff8000]">
      <div className="flex h-[38px] items-center pl-[10px]">
        <UsbDrive className="h-5 w-5" />
        <Fit w={120} className="-mt-0.5 ml-[5px] text-white">Disk Management</Fit>
        <div className="-mt-0.5 ml-auto flex gap-0.5">
          <div className="flex h-[36px] w-[58px] items-center justify-center bg-[#00101c]">
            <div className="mt-1.5 h-[3px] w-[13px] bg-[#59ff00]" />
          </div>
          <div className="flex h-[36px] w-[57px] items-center justify-center bg-[#00101c]">
            <div className="-mt-0.5 h-2.5 w-3 border-[3px] border-[#59ff00]" />
          </div>
          <div className="flex h-[36px] w-[58px] items-center justify-center bg-[#00101c] pr-px">
            <svg viewBox="0 0 11 10" className="-mt-0.5 h-2.5 w-[11px]">
              <path d="M1.500 0l8 10M9.500 0l-8 10" stroke="#59ff00" strokeWidth="3" />
            </svg>
          </div>
        </div>
      </div>
      <div className="flex h-[706px] flex-col bg-[#0d0680]">
        <div className="flex h-[30px] items-center border-b-[3px] border-[#52f400] pl-3 pt-0.5 text-[#4fe41c]">
          <Fit w={23}>File</Fit>
          <Fit w={41} className="ml-5">Action</Fit>
          <Fit w={31} className="ml-5">View</Fit>
          <Fit w={30} className="ml-[19px]">Help</Fit>
        </div>
        <Toolbar />
        <div className="h-px bg-[#808090]" />
        <div className="flex h-[612px] flex-col border-x-2 border-[#e4e4ea]">
          <VolumeList />
          <div className="h-[3px] shrink-0" />
          <div className="h-[7px] shrink-0 border-b-2 border-t-[3px] border-white" />
          <div className="flex h-[267px] shrink-0">
            <div className="w-[914px] pt-[5px]">
              <DiskRow name="Disk 0" size="931.51 GB" parts={disk0} className="w-[698px]" />
              <DiskRow name="Disk 1" size="119.23 GB" parts={disk1} className="w-[594px]" />
            </div>
            <ScrollBar className="h-[267px]" thumb="h-[75px]" />
          </div>
          <div className="flex h-[29px] shrink-0 items-center border-b-[3px] border-t-2 border-b-[#f0f0f4] border-t-[#9c9cb4] pl-[7px] text-[#4fe41c]">
            <div className="h-[18px] w-[15px] border border-[#c0c0c8] bg-black" />
            <Fit w={78} className="ml-[5px]">Unallocated</Fit>
            <div className="ml-[7px] h-[18px] w-[15px] border border-[#c0c0c8] bg-[#000080]" />
            <Fit w={110} className="ml-[5px]">Primary partition</Fit>
          </div>
        </div>
        <div className="flex h-[29px] justify-end border border-[#4fc428]">
          <div className="mt-0.5 w-[166px] border-l border-[#3c9a2a]" />
          <div className="mt-0.5 w-[108px] border-l border-r border-[#2f7a55]" />
        </div>
      </div>
      <svg viewBox="0 0 11 17" className="absolute left-[488px] top-[607px] h-[18px] w-3">
        <path d="M0 0v14l3.500-3L6 16.500l2.200-1L6 10h4.500z" fill="#fff" />
      </svg>
    </div>
  );
}

/* ---------- taskbar ---------- */

function Task({ icon, className, bar = "" }: { icon: React.ReactNode; className: string; bar?: string }) {
  return (
    <div className={`flex h-[49px] shrink-0 flex-col items-center ${className}`}>
      <div className="flex h-[45px] items-center justify-center pt-0.5">{icon}</div>
      {bar && <div className={`h-[3px] border-x border-[#0d0680] bg-[#ff8000] ${bar}`} />}
    </div>
  );
}

function Taskbar() {
  return (
    <div className="flex h-[50px] w-full border-t border-[#59ff00] text-[15px] text-[#4fe41c]">
      <div className="-mt-px flex h-[50px] w-[60px] items-center justify-center border border-[#59ff00]">
        <WinLogo className="h-[21px] w-5 text-[#59ff00]" />
      </div>
      <div className="ml-1.5 mt-[11px] h-[26px] w-1 border-x border-[#59ff00]" />
      <Task
        className="ml-[12px] w-[62px]"
        icon={
          <svg viewBox="0 0 28 23" className="h-[23px] w-7">
            <rect width="28" height="23" fill="#a9adb0" />
            <rect x="1" y="3" width="26" height="19" fill="#050505" />
            <path d="M3 6h2M6.500 6h1M9 5l2 3M12 8h4" stroke="#ddd" />
          </svg>
        }
      />
      <div className="flex h-[49px] w-[63px] shrink-0 flex-col items-center">
        <div className="flex h-[45px] items-center pt-0.5">
          <ExplorerIcon className="h-[23px] w-[28px]" />
        </div>
        <div className="flex h-[3px] w-[51px] gap-px bg-[#0d0680]">
          <div className="flex-1 bg-[#ff8000]" />
          <div className="w-[10px] bg-[#ff8000]" />
        </div>
      </div>
      <Task
        className="w-[62px]"
        bar="w-[51px]"
        icon={
          <svg viewBox="0 0 30 30" className="h-[30px] w-[30px]">
            <defs>
              <linearGradient id="fx" x1=".8" y1="0" x2=".3" y2="1">
                <stop offset="0" stopColor="#fff04a" />
                <stop offset=".45" stopColor="#ff9a2a" />
                <stop offset="1" stopColor="#f5156e" />
              </linearGradient>
            </defs>
            <path d="M18 0c2 4 6 5 8 9 1-1 1-2 1-3 3 7 3 14-1 19-5 6-16 6-21 0C1 20 0 13 4 8l1 3c1-2 3-4 5-5l2 2c2 0 4-3 6-8z" fill="url(#fx)" />
            <circle cx="15.500" cy="15.500" r="6" fill="#6e3ee0" />
            <path d="M6 10c4-2 6 0 8 2-3 0-4 1-4 3 1 5 9 5 11 0 1 7-6 11-11 8-4-3-5-8-4-13z" fill="#ff7a2c" />
          </svg>
        }
      />
      <Task
        className="w-[62px]"
        icon={
          <div className="flex h-[30px] w-[30px] items-center justify-center bg-[#0e3a52]">
            <svg viewBox="0 0 20 16" className="h-4 w-5">
              <rect width="20" height="16" fill="#3c3f42" />
              <path d="M0 1h20" stroke="#9aa0a4" strokeWidth="2" />
              <path d="M4 5l4 3.500L4 12M10 13h5" fill="none" stroke="#eee" strokeWidth="1.700" />
            </svg>
          </div>
        }
      />
      <Task
        className="w-[62px]"
        bar="w-[51px]"
        icon={
          <svg viewBox="0 0 28 28" className="h-7 w-7">
            <path d="M0 4l12-4 7 3v23l-9 2-10-3z" fill="#12a9bf" />
            <path d="M0 4l12-4 7 3-9 3z" fill="#5fe6ee" />
            <path d="M16 12l8-3 4 2v15l-7 2-5-2z" fill="#1fc3d6" />
            <path d="M2 9l7 2M2 13l7 2M2 17l7 2M2 21l7 2M17 15l4 1M17 19l4 1M17 23l4 1" stroke="#c8fbff" strokeWidth="1.500" />
            <path d="M10 6v22M21 13v15" stroke="#0a7f92" />
          </svg>
        }
      />
      <Task
        className="w-[62px]"
        bar="w-[51px]"
        icon={
          <svg viewBox="0 0 26 28" className="h-7 w-[26px]">
            <path d="M1 2l6-2 3 2v14l-5 2-4-2z" fill="#9a9ea4" />
            <path d="M2 5h4M2 8h4" stroke="#333" />
            <path d="M8 2l17 4v14L8 15z" fill="#c8d4dc" />
            <path d="M9.500 4l14 3.300v10.500L9.500 14z" fill="#3fa8f4" />
            <path d="M0 18l14 4 7 2-2 4-12-2-7-4z" fill="#4cc25c" />
            <path d="M15 20l5 2-2 4-4-1z" fill="#e0e2e4" />
          </svg>
        }
      />
      <Task className="ml-px w-[61px] bg-[#0e3a52]" bar="w-[61px]" icon={<UsbDriveLarge />} />
      <div className="ml-auto mt-[11px] h-[26px] w-1 border-x border-[#59ff00]" />
      <div className="-mt-0.5 ml-[11px] flex items-center">
        <Fit w={54}>Desktop</Fit>
      </div>
      <div className="-mt-px ml-1 h-[50px] w-[21px] bg-[#0d0680] pl-1.5 pt-2">
        <svg viewBox="0 0 9 7" className="h-[7px] w-[9px]">
          <path d="M.5.5l3 3-3 3M5 .5l3 3-3 3" fill="none" stroke="#59ff00" strokeWidth="1.300" />
        </svg>
      </div>
      <div className="-mt-px flex h-[50px]">
        <div className="flex w-[30px] items-center justify-center border border-[#ff8000]">
          <svg viewBox="0 0 16 9" className="h-[9px] w-4">
            <path d="M.5 8.500L8 1l7.500 7.500" fill="none" stroke="#fff" strokeWidth="1.300" />
          </svg>
        </div>
        <div className="flex w-[30px] items-center justify-center border border-[#ff8000]">
          <svg viewBox="0 0 20 20" className="h-5 w-5">
            <circle cx="10" cy="10" r="10" fill="#901818" />
            <path d="M8 2c5-1 5 3 2 4M10 6c-5 0-5 5 0 5s5-5 0-5zM10 11c-5 0-5 7 0 7s5-7 0-7z" fill="none" stroke="#fff" strokeWidth="2" />
          </svg>
        </div>
        <div className="flex w-[30px] items-center justify-center border border-[#ff8000]">
          <svg viewBox="0 0 16 21" className="h-[21px] w-4">
            <path d="M3 6V1h8v5M1 6h11v14H3l-2-2zM5 3.500h1M8.500 3.500h1" fill="none" stroke="#ff8000" strokeWidth="1.200" />
            <path d="M9 17l2.500 2.500L16 15" fill="none" stroke="#9a5518" strokeWidth="1.500" />
          </svg>
        </div>
        <div className="flex w-[30px] items-center justify-center border border-[#ff8000]">
          <svg viewBox="0 0 16 16" className="h-4 w-4">
            <path d="M1 15C1 7 7 1 15 1M5 15C5 9 9 5 15 5M9 15c0-4 2-6 6-6" fill="none" stroke="#b86a20" strokeDasharray="4 1" />
            <circle cx="13.500" cy="13.500" r="1.500" fill="#ff8000" />
          </svg>
        </div>
        <div className="flex w-[84px] flex-col items-center border border-[#59ff00] pt-px leading-[23px]">
          <Fit w={54}>2:46 AM</Fit>
          <Fit w={76}>10/30/2020</Fit>
        </div>
        <div className="w-8 border border-[#ff8000]" />
      </div>
    </div>
  );
}

const captionLines: [string, number][] = [
  ["this give us our", 482],
  ["partition tables file", 584],
  ["system and here we", 630],
  ["can see where our", 574],
  ["boot drive is (marked", 672],
  ["boot)", 166],
];

export default function App() {
  return (
    <div className="relative h-[1080px] w-[1920px] overflow-hidden bg-[#00101c] font-['Open_Sans','Noto_Sans',sans-serif]">
      <Explorer />
      <Taskbar />
      <PropertiesDialog />
      <DiskManagement />
      <div className="absolute left-[1216px] top-[294px] flex flex-col items-start font-['DejaVu_Sans',sans-serif] text-[62.500px] leading-[77px] text-[#ff9010]">
        {captionLines.map(([t, w]) => (
          <Fit key={t} w={w}>{t}</Fit>
        ))}
      </div>
    </div>
  );
}
